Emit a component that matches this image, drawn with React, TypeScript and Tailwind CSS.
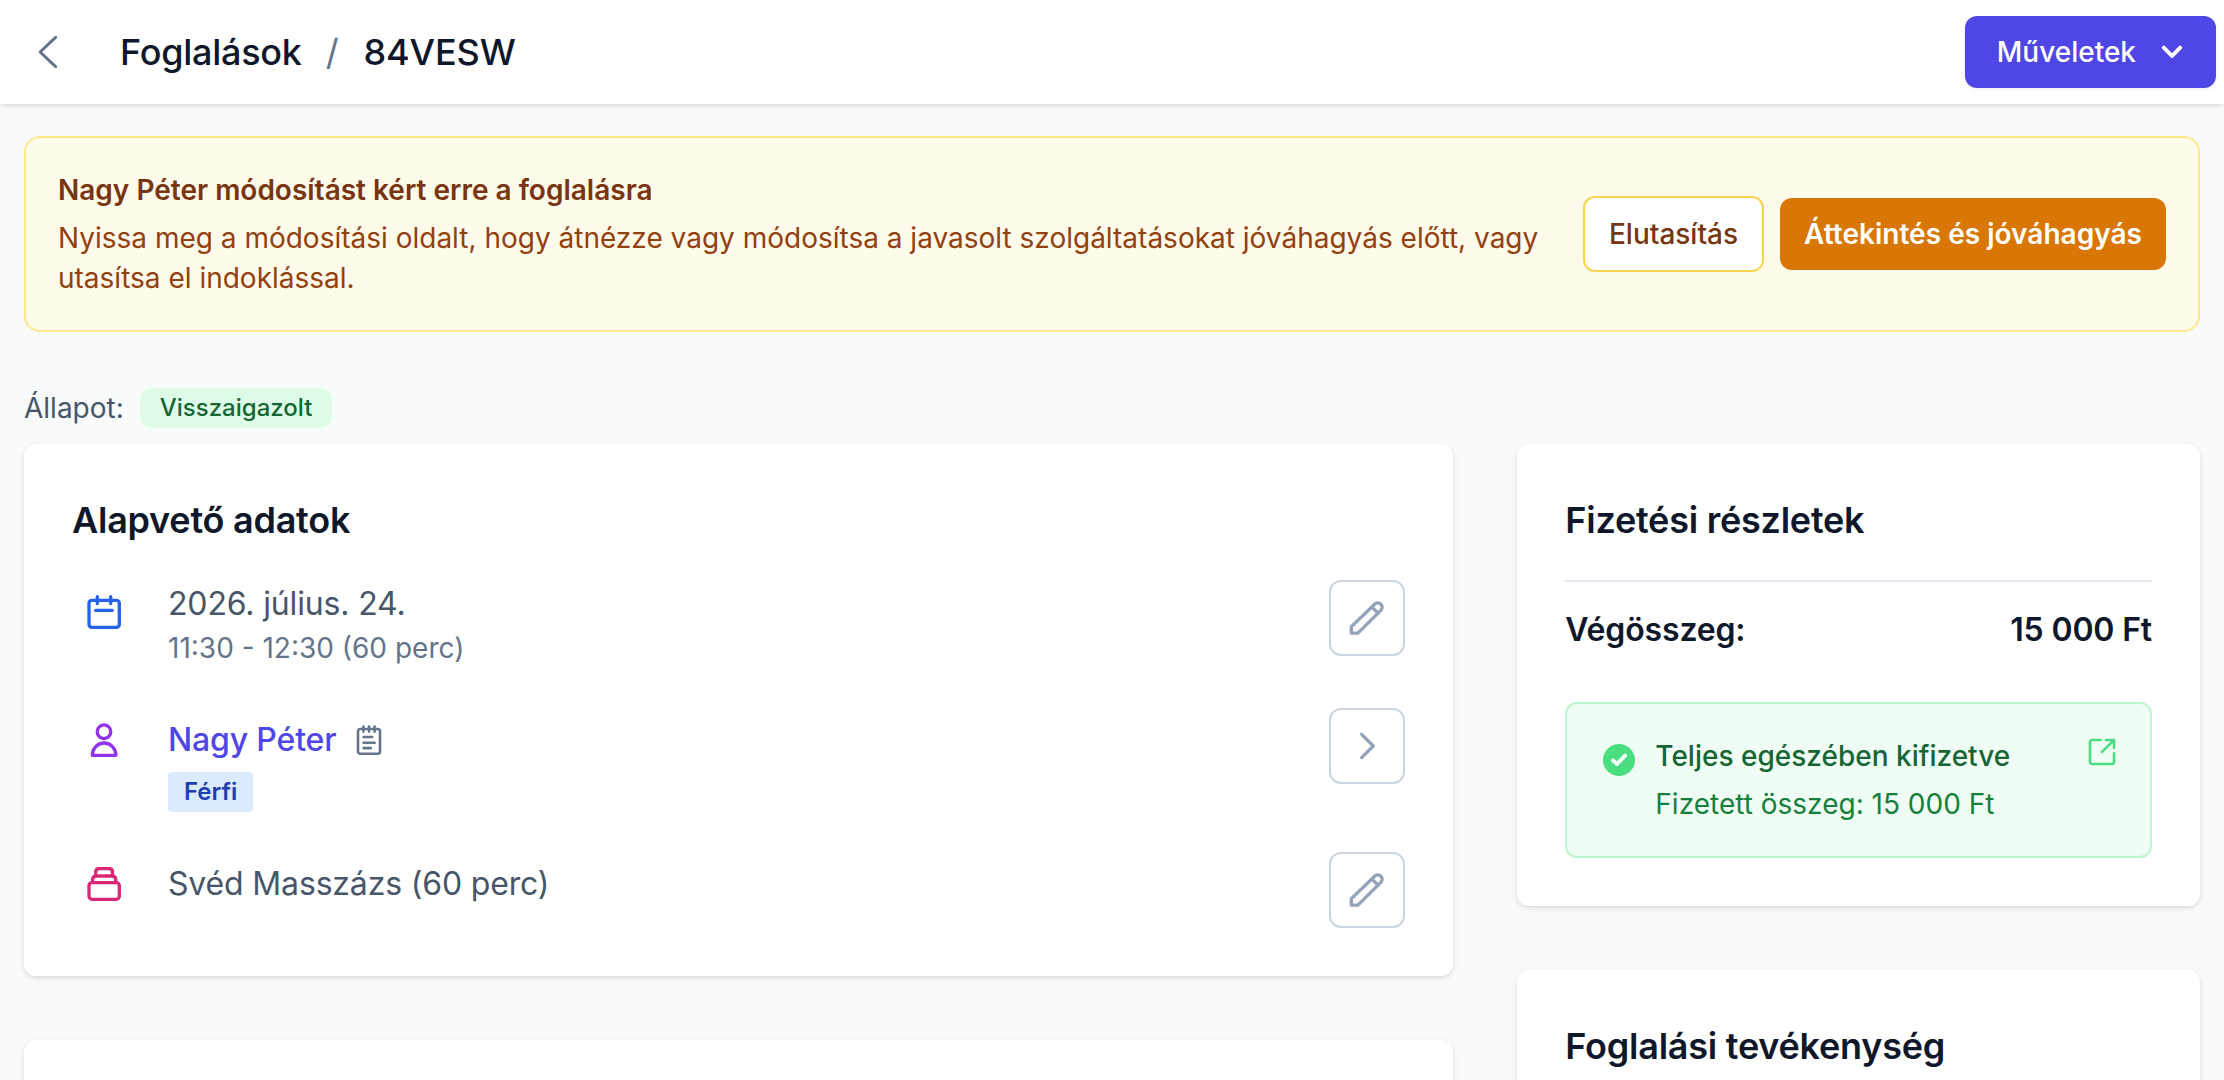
import React from "react";
import clsx from "clsx";

type IconProps = {
  className?: string;
};

const strokeProps = {
  fill: "none",
  stroke: "currentColor",
  strokeLinecap: "round",
  strokeLinejoin: "round",
} as const;

const CalendarIcon: React.FC<IconProps> = ({ className }) => (
  <svg viewBox="0 0 40 40" {...strokeProps} strokeWidth={3.3} className={className}>
    <rect x="5" y="8.3" width="30.3" height="27" rx="2.8" />
    <path d="M13.3 4.7v6.8M26.7 4.7v6.8M11.7 18.4H28.2" />
  </svg>
);

const UserIcon: React.FC<IconProps> = ({ className }) => (
  <svg viewBox="0 0 40 40" {...strokeProps} strokeWidth={3.3} className={className}>
    <circle cx="20" cy="11.7" r="6.8" />
    <path d="M8.3 35.3a11.8 12.3 0 0 1 23.6 0z" />
  </svg>
);

const CollectionIcon: React.FC<IconProps> = ({ className }) => (
  <svg viewBox="0 0 40 40" {...strokeProps} strokeWidth={3.3} className={className}>
    <rect x="5" y="18.6" width="30.3" height="16.7" rx="3" />
    <path d="M8.6 18.4v-3c0-2 1.4-3.4 3.3-3.4h16.5c1.9 0 3.3 1.4 3.3 3.4v3" />
    <path d="M11.7 11.8V8c0-2 1.3-3.3 3.2-3.3h10.4c1.9 0 3.2 1.3 3.2 3.3v3.8" />
  </svg>
);

const NotesIcon: React.FC<IconProps> = ({ className }) => (
  <svg viewBox="0 0 32 32" {...strokeProps} strokeWidth={2.6} className={className}>
    <rect x="5" y="5" width="22" height="24.7" rx="2.2" />
    <path d="M10.4 2.6v5M16 2.6v5M21.6 2.6v5M10.6 13h8.6M10.6 18.7h11M10.6 24.1h7.2" />
  </svg>
);

const PencilIcon: React.FC<IconProps> = ({ className }) => (
  <svg viewBox="0 0 40 40" {...strokeProps} strokeWidth={3.3} className={className}>
    <path d="M4.3 35.2v-6.4L27.9 6a4.4 4.4 0 0 1 6.2 6.2L10.9 35.2z" />
    <path d="M24.9 9l6.1 6.2" />
  </svg>
);

const ExternalIcon: React.FC<IconProps> = ({ className }) => (
  <svg viewBox="0 0 32 32" {...strokeProps} strokeWidth={2.6} className={className}>
    <path d="M14.8 4H6.2A2.2 2.2 0 0 0 4 6.2v19.6A2.2 2.2 0 0 0 6.2 28h19.6a2.2 2.2 0 0 0 2.2-2.2v-8.4" />
    <path d="M19.9 4H28v8M28 4L15.8 16.2" />
  </svg>
);

const CheckBadge: React.FC<IconProps> = ({ className }) => (
  <svg viewBox="0 0 32 32" className={className}>
    <circle cx="16" cy="16" r="16" fill="currentColor" />
    <path d="M10 16.4l4 3.6 8-8.3" fill="none" stroke="#f0fdf4" strokeWidth="4" strokeLinecap="round" strokeLinejoin="round" />
  </svg>
);

type DetailRowProps = {
  icon: React.ReactNode;
  action: "edit" | "open";
  children: React.ReactNode;
};

const DetailRow: React.FC<DetailRowProps> = ({ icon, action, children }) => (
  <div className="flex items-start">
    <div className="mt-3 mr-11 ml-3 size-10 shrink-0">{icon}</div>
    <div className="flex-1">{children}</div>
    <button className="flex size-[76px] items-center justify-center rounded-xl border-2 border-[#cbd5e1] bg-white text-[#94a3b8]">
      {action === "edit" ? (
        <PencilIcon className="size-10" />
      ) : (
        <svg viewBox="0 0 40 40" {...strokeProps} strokeWidth={3.3} className="size-10">
          <path d="M14.6 8.3L26.4 20 14.6 31.7" />
        </svg>
      )}
    </button>
  </div>
);

type CardProps = {
  title?: string;
  className?: string;
  children?: React.ReactNode;
};

const Card: React.FC<CardProps> = ({ title, className, children }) => (
  <section
    className={clsx(
      "rounded-xl bg-white p-12 shadow-[0_2px_6px_0_rgb(0_0_0/0.1),0_2px_4px_-2px_rgb(0_0_0/0.1)]",
      className
    )}
  >
    {title && (
      <h2 className="text-[36px] leading-14 font-semibold tracking-[-0.24px] text-[#0f172a]">{title}</h2>
    )}
    {children}
  </section>
);

const App: React.FC = () => {
  return (
    <div className="h-[1080px] overflow-hidden bg-[#f8fafc] font-['Inter',sans-serif]">
      <header className="relative flex h-26 items-center bg-white pr-2 pl-6 shadow-[0_2px_6px_0_rgb(0_0_0/0.1),0_2px_4px_-2px_rgb(0_0_0/0.1)]">
        <svg viewBox="0 0 48 48" {...strokeProps} strokeWidth={3} className="size-12 text-[#64748b]">
          <path d="M31.6 9.4L16.1 24l15.5 14.6" />
        </svg>
        <nav className="ml-12 flex items-center text-[36px] leading-14 font-medium tracking-[-0.26px] text-[#0f172a]">
          <span>Foglalások</span>
          <span className="mr-[25px] ml-6 font-normal text-[#64748b]">/</span>
          <span className="tracking-[-0.1px]">84VESW</span>
        </nav>
        <button className="ml-auto flex h-18 items-center rounded-xl bg-[#4f46e5] pr-6 pl-8 text-[28px] leading-10 font-medium text-white shadow-[0_2px_4px_0_rgb(0_0_0/0.05)]">
          Műveletek
          <svg viewBox="0 0 40 40" {...strokeProps} strokeWidth={3.9} className="ml-4 size-10">
            <path d="M11.8 15.6l8.2 8.4 8.2-8.4" />
          </svg>
        </button>
      </header>

      <main className="px-6 pt-8">
        <div className="flex items-center gap-8 rounded-2xl border-2 border-[#fde68a] bg-[#fffbeb] p-8 text-[28px] leading-10">
          <div className="flex-1">
            <p className="font-semibold text-[#78350f]">Nagy Péter módosítást kért erre a foglalásra</p>
            <p className="mt-2 text-[#92400e]">
              Nyissa meg a módosítási oldalt, hogy átnézze vagy módosítsa a javasolt szolgáltatásokat jóváhagyás előtt, vagy utasítsa el indoklással.
            </p>
          </div>
          <div className="flex shrink-0 items-center gap-4">
            <button className="h-19 rounded-xl border-2 border-[#fcd34d] bg-white px-6 font-medium text-[#78350f]">
              Elutasítás
            </button>
            <button className="h-18 rounded-xl bg-[#d97706] px-6 font-semibold tracking-[0.02px] text-white">
              Áttekintés és jóváhagyás
            </button>
          </div>
        </div>

        <div className="mt-14 flex h-10 items-center gap-4 text-[28px] leading-10 text-[#475569]">
          <span>Állapot:</span>
          <span className="rounded-xl bg-[#dcfce7] px-5 text-[24px] font-medium text-[#166534]">
            Visszaigazolt
          </span>
        </div>

        <div className="mt-4 grid grid-cols-3 gap-16">
          <div className="col-span-2 flex flex-col gap-16">
            <Card title="Alapvető adatok">
              <div className="mt-8 flex flex-col gap-10">
                <DetailRow icon={<CalendarIcon className="size-10 text-[#2563eb]" />} action="edit">
                  <p className="text-[32px] leading-12 tracking-[-0.16px] text-[#475569]">2026. július. 24.</p>
                  <p className="text-[28px] leading-10 text-[#64748b]">11:30 - 12:30 (60 perc)</p>
                </DetailRow>
                <DetailRow icon={<UserIcon className="size-10 text-[#9333ea]" />} action="open">
                  <div className="mt-2 flex items-center gap-[17px] text-[32px] leading-12 tracking-[-0.16px]">
                    <a className="font-medium text-[#4f46e5]">Nagy Péter</a>
                    <NotesIcon className="size-8 text-[#64748b]" />
                  </div>
                  <span className="mt-2 block w-fit rounded-sm bg-[#dbeafe] px-4 text-[24px] leading-10 font-semibold text-[#1e40af]">
                    Férfi
                  </span>
                </DetailRow>
                <DetailRow icon={<CollectionIcon className="size-10 text-[#db2777]" />} action="edit">
                  <p className="mt-2 text-[32px] leading-12 tracking-[-0.16px] text-[#475569]">Svéd Masszázs (60 perc)</p>
                </DetailRow>
              </div>
            </Card>
            <Card className="h-60" />
          </div>

          <div className="flex flex-col gap-16">
            <Card title="Fizetési részletek">
              <div className="mt-8 flex justify-between border-t-2 border-[#e2e8f0] pt-6 text-[32px] leading-12 font-semibold tracking-[-0.16px] text-[#0f172a]">
                <span>Végösszeg:</span>
                <span>15 000 Ft</span>
              </div>
              <div className="mt-12 flex items-start rounded-xl border-2 border-[#bbf7d0] bg-[#f0fdf4] p-8 text-[28px] leading-10">
                <CheckBadge className="mt-2 ml-1 size-8 text-[#4ade80]" />
                <div className="ml-5 flex-1">
                  <p className="font-medium text-[#166534]">Teljes egészében kifizetve</p>
                  <p className="mt-2 text-[#15803d]">Fizetett összeg: 15 000 Ft</p>
                </div>
                <ExternalIcon className="size-8 text-[#4ade80]" />
              </div>
            </Card>
            <Card title="Foglalási tevékenység" className="h-60" />
          </div>
        </div>
      </main>
    </div>
  );
};

export default App;
